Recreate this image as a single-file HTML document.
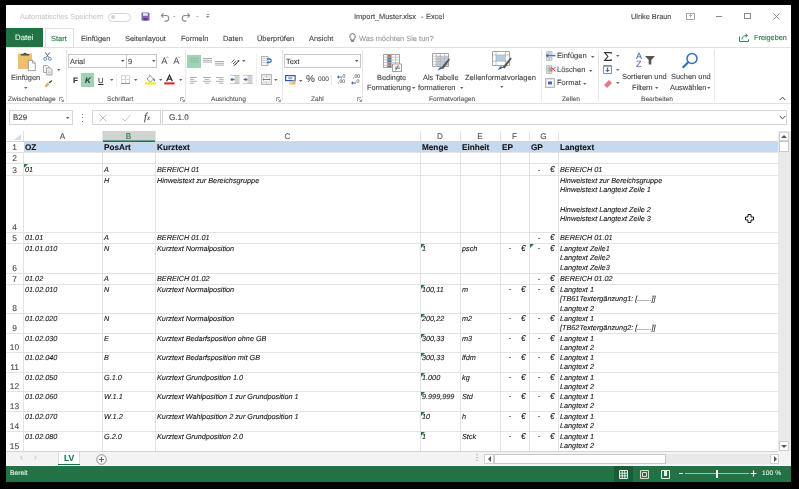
<!DOCTYPE html><html><head><meta charset="utf-8"><style>
html,body{margin:0;padding:0;}
body{width:799px;height:489px;background:#000;position:relative;overflow:hidden;font-family:"Liberation Sans",sans-serif;}
.t{position:absolute;white-space:pre;line-height:1;will-change:transform;text-rendering:geometricPrecision;-webkit-text-stroke:0.1px currentColor;}
.r{position:absolute;}
svg.r{overflow:visible}
</style></head><body>
<div class="r" style="left:6px;top:5px;width:785px;height:477px;background:#fff;"></div>
<div class="r" style="left:24px;top:141px;width:754px;height:11px;background:#c5d9f1;"></div>
<div class="r" style="left:103px;top:131px;width:52px;height:10px;background:#d2d2d2;"></div>
<div class="r" style="left:6px;top:141px;width:772px;height:1px;background:#e3e3e3;"></div>
<div class="r" style="left:6px;top:152px;width:772px;height:1px;background:#e3e3e3;"></div>
<div class="r" style="left:6px;top:163px;width:772px;height:1px;background:#e3e3e3;"></div>
<div class="r" style="left:6px;top:175px;width:772px;height:1px;background:#e3e3e3;"></div>
<div class="r" style="left:6px;top:232px;width:772px;height:1px;background:#e3e3e3;"></div>
<div class="r" style="left:6px;top:243px;width:772px;height:1px;background:#e3e3e3;"></div>
<div class="r" style="left:6px;top:273px;width:772px;height:1px;background:#e3e3e3;"></div>
<div class="r" style="left:6px;top:284px;width:772px;height:1px;background:#e3e3e3;"></div>
<div class="r" style="left:6px;top:313px;width:772px;height:1px;background:#e3e3e3;"></div>
<div class="r" style="left:6px;top:333px;width:772px;height:1px;background:#e3e3e3;"></div>
<div class="r" style="left:6px;top:352px;width:772px;height:1px;background:#e3e3e3;"></div>
<div class="r" style="left:6px;top:372px;width:772px;height:1px;background:#e3e3e3;"></div>
<div class="r" style="left:6px;top:391px;width:772px;height:1px;background:#e3e3e3;"></div>
<div class="r" style="left:6px;top:411px;width:772px;height:1px;background:#e3e3e3;"></div>
<div class="r" style="left:6px;top:431px;width:772px;height:1px;background:#e3e3e3;"></div>
<div class="r" style="left:6px;top:451px;width:772px;height:1px;background:#e3e3e3;"></div>
<div class="r" style="left:23px;top:131px;width:1px;height:10px;background:#e3e3e3;"></div>
<div class="r" style="left:23px;top:152px;width:1px;height:299px;background:#e3e3e3;"></div>
<div class="r" style="left:102px;top:131px;width:1px;height:10px;background:#e3e3e3;"></div>
<div class="r" style="left:102px;top:152px;width:1px;height:299px;background:#e3e3e3;"></div>
<div class="r" style="left:155px;top:131px;width:1px;height:10px;background:#e3e3e3;"></div>
<div class="r" style="left:155px;top:152px;width:1px;height:299px;background:#e3e3e3;"></div>
<div class="r" style="left:420px;top:131px;width:1px;height:10px;background:#e3e3e3;"></div>
<div class="r" style="left:420px;top:152px;width:1px;height:299px;background:#e3e3e3;"></div>
<div class="r" style="left:460px;top:131px;width:1px;height:10px;background:#e3e3e3;"></div>
<div class="r" style="left:460px;top:152px;width:1px;height:299px;background:#e3e3e3;"></div>
<div class="r" style="left:500px;top:131px;width:1px;height:10px;background:#e3e3e3;"></div>
<div class="r" style="left:500px;top:152px;width:1px;height:299px;background:#e3e3e3;"></div>
<div class="r" style="left:529px;top:131px;width:1px;height:10px;background:#e3e3e3;"></div>
<div class="r" style="left:529px;top:152px;width:1px;height:299px;background:#e3e3e3;"></div>
<div class="r" style="left:558px;top:131px;width:1px;height:10px;background:#e3e3e3;"></div>
<div class="r" style="left:558px;top:152px;width:1px;height:299px;background:#e3e3e3;"></div>
<div class="r" style="left:778px;top:131px;width:1px;height:10px;background:#e3e3e3;"></div>
<div class="r" style="left:778px;top:152px;width:1px;height:299px;background:#e3e3e3;"></div>
<div class="r" style="left:24px;top:141px;width:754px;height:11px;background:#c5d9f1;"></div>
<div class="r" style="left:6px;top:141px;width:772px;height:1px;background:#d3d6da;"></div>
<div class="r" style="left:103px;top:140px;width:52px;height:1px;background:#6aa184;"></div>
<div class="r" style="left:103px;top:141px;width:52px;height:1px;background:#217346;"></div>
<svg class="r" style="left:14px;top:134px" width="7" height="6"><polygon points="7,0 7,6 0,6" fill="#dcdcdc"/></svg>
<div class="t" style="left:23px;width:79px;text-align:center;top:132.76px;font-size:8.2px;color:#555">A</div>
<div class="t" style="left:102px;width:53px;text-align:center;top:132.76px;font-size:8.2px;color:#217346">B</div>
<div class="t" style="left:155px;width:265px;text-align:center;top:132.76px;font-size:8.2px;color:#555">C</div>
<div class="t" style="left:420px;width:40px;text-align:center;top:132.76px;font-size:8.2px;color:#555">D</div>
<div class="t" style="left:460px;width:40px;text-align:center;top:132.76px;font-size:8.2px;color:#555">E</div>
<div class="t" style="left:500px;width:29px;text-align:center;top:132.76px;font-size:8.2px;color:#555">F</div>
<div class="t" style="left:529px;width:29px;text-align:center;top:132.76px;font-size:8.2px;color:#555">G</div>
<div class="t" style="left:6px;width:17px;text-align:center;top:142.99px;font-size:8.4px;color:#4a4a4a">1</div>
<div class="t" style="left:6px;width:17px;text-align:center;top:153.99px;font-size:8.4px;color:#4a4a4a">2</div>
<div class="t" style="left:6px;width:17px;text-align:center;top:165.99px;font-size:8.4px;color:#4a4a4a">3</div>
<div class="t" style="left:6px;width:17px;text-align:center;top:222.99px;font-size:8.4px;color:#4a4a4a">4</div>
<div class="t" style="left:6px;width:17px;text-align:center;top:233.99px;font-size:8.4px;color:#4a4a4a">5</div>
<div class="t" style="left:6px;width:17px;text-align:center;top:263.99px;font-size:8.4px;color:#4a4a4a">6</div>
<div class="t" style="left:6px;width:17px;text-align:center;top:274.99px;font-size:8.4px;color:#4a4a4a">7</div>
<div class="t" style="left:6px;width:17px;text-align:center;top:303.99px;font-size:8.4px;color:#4a4a4a">8</div>
<div class="t" style="left:6px;width:17px;text-align:center;top:323.99px;font-size:8.4px;color:#4a4a4a">9</div>
<div class="t" style="left:6px;width:17px;text-align:center;top:342.99px;font-size:8.4px;color:#4a4a4a">10</div>
<div class="t" style="left:6px;width:17px;text-align:center;top:362.99px;font-size:8.4px;color:#4a4a4a">11</div>
<div class="t" style="left:6px;width:17px;text-align:center;top:381.99px;font-size:8.4px;color:#4a4a4a">12</div>
<div class="t" style="left:6px;width:17px;text-align:center;top:401.99px;font-size:8.4px;color:#4a4a4a">13</div>
<div class="t" style="left:6px;width:17px;text-align:center;top:421.99px;font-size:8.4px;color:#4a4a4a">14</div>
<div class="t" style="left:6px;width:17px;text-align:center;top:441.99px;font-size:8.4px;color:#4a4a4a">15</div>
<div class="t" style="left:25.10px;top:144.26px;font-size:8.2px;color:#111;font-style:normal;font-weight:700;">OZ</div>
<div class="t" style="left:104.10px;top:144.26px;font-size:8.2px;color:#111;font-style:normal;font-weight:700;">PosArt</div>
<div class="t" style="left:157.10px;top:144.26px;font-size:8.2px;color:#111;font-style:normal;font-weight:700;">Kurztext</div>
<div class="t" style="left:422.10px;top:144.26px;font-size:8.2px;color:#111;font-style:normal;font-weight:700;">Menge</div>
<div class="t" style="left:462.10px;top:144.26px;font-size:8.2px;color:#111;font-style:normal;font-weight:700;">Einheit</div>
<div class="t" style="left:502.10px;top:144.26px;font-size:8.2px;color:#111;font-style:normal;font-weight:700;">EP</div>
<div class="t" style="left:531.10px;top:144.26px;font-size:8.2px;color:#111;font-style:normal;font-weight:700;">GP</div>
<div class="t" style="left:560.10px;top:144.26px;font-size:8.2px;color:#111;font-style:normal;font-weight:700;">Langtext</div>
<div class="t" style="left:25.00px;top:166.24px;font-size:7.28px;color:#161616;font-style:italic;font-weight:400;">01</div>
<svg class="r" style="left:24px;top:164px" width="4" height="4"><polygon points="0,0 4,0 0,4" fill="#1f7a3e"/></svg>
<div class="t" style="left:104.00px;top:166.24px;font-size:7.28px;color:#161616;font-style:italic;font-weight:400;">A</div>
<div class="t" style="left:157.00px;top:166.24px;font-size:7.28px;color:#161616;font-style:italic;font-weight:400;">BEREICH 01</div>
<div class="r" style="left:538.00px;top:169.70px;width:2.4px;height:1px;background:#808080"></div>
<div class="t" style="left:550.40px;top:166.06px;font-size:8.2px;color:#161616;font-style:italic;font-weight:400;text-rendering:optimizeLegibility;">€</div>
<div class="t" style="left:560.00px;top:166.24px;font-size:7.28px;color:#161616;font-style:italic;font-weight:400;">BEREICH 01</div>
<div class="t" style="left:104.00px;top:176.84px;font-size:7.28px;color:#161616;font-style:italic;font-weight:400;">H</div>
<div class="t" style="left:157.00px;top:176.84px;font-size:7.28px;color:#161616;font-style:italic;font-weight:400;">Hinweistext zur Bereichsgruppe</div>
<div class="t" style="left:560.00px;top:176.84px;font-size:7.28px;color:#161616;font-style:italic;font-weight:400;">Hinweistext zur Bereichsgruppe</div>
<div class="t" style="left:560.00px;top:186.44px;font-size:7.28px;color:#161616;font-style:italic;font-weight:400;">Hinweistext Langtext Zeile 1</div>
<div class="t" style="left:560.00px;top:196.04px;font-size:7.28px;color:#161616;font-style:italic;font-weight:400;"></div>
<div class="t" style="left:560.00px;top:205.64px;font-size:7.28px;color:#161616;font-style:italic;font-weight:400;">Hinweistext Langtext Zeile 2</div>
<div class="t" style="left:560.00px;top:215.24px;font-size:7.28px;color:#161616;font-style:italic;font-weight:400;">Hinweistext Langtext Zeile 3</div>
<div class="t" style="left:25.00px;top:234.24px;font-size:7.28px;color:#161616;font-style:italic;font-weight:400;">01.01</div>
<div class="t" style="left:104.00px;top:234.24px;font-size:7.28px;color:#161616;font-style:italic;font-weight:400;">A</div>
<div class="t" style="left:157.00px;top:234.24px;font-size:7.28px;color:#161616;font-style:italic;font-weight:400;">BEREICH 01.01</div>
<div class="r" style="left:538.00px;top:237.70px;width:2.4px;height:1px;background:#808080"></div>
<div class="t" style="left:550.40px;top:234.06px;font-size:8.2px;color:#161616;font-style:italic;font-weight:400;text-rendering:optimizeLegibility;">€</div>
<div class="t" style="left:560.00px;top:234.24px;font-size:7.28px;color:#161616;font-style:italic;font-weight:400;">BEREICH 01.01</div>
<div class="t" style="left:25.00px;top:244.84px;font-size:7.28px;color:#161616;font-style:italic;font-weight:400;">01.01.010</div>
<div class="t" style="left:104.00px;top:244.84px;font-size:7.28px;color:#161616;font-style:italic;font-weight:400;">N</div>
<div class="t" style="left:157.00px;top:244.84px;font-size:7.28px;color:#161616;font-style:italic;font-weight:400;">Kurztext Normalposition</div>
<svg class="r" style="left:421px;top:244px" width="4" height="4"><polygon points="0,0 4,0 0,4" fill="#1f7a3e"/></svg>
<div class="t" style="left:422.00px;top:244.84px;font-size:7.28px;color:#161616;font-style:italic;font-weight:400;">1</div>
<div class="t" style="left:462.00px;top:244.84px;font-size:7.28px;color:#161616;font-style:italic;font-weight:400;">psch</div>
<div class="r" style="left:509.00px;top:248.30px;width:2.4px;height:1px;background:#808080"></div>
<div class="t" style="left:521.40px;top:244.66px;font-size:8.2px;color:#161616;font-style:italic;font-weight:400;text-rendering:optimizeLegibility;">€</div>
<svg class="r" style="left:530px;top:244px" width="4" height="4"><polygon points="0,0 4,0 0,4" fill="#1f7a3e"/></svg>
<div class="r" style="left:538.00px;top:248.30px;width:2.4px;height:1px;background:#808080"></div>
<div class="t" style="left:550.40px;top:244.66px;font-size:8.2px;color:#161616;font-style:italic;font-weight:400;text-rendering:optimizeLegibility;">€</div>
<div class="t" style="left:560.00px;top:244.84px;font-size:7.28px;color:#161616;font-style:italic;font-weight:400;">Langtext Zeile1</div>
<div class="t" style="left:560.00px;top:254.44px;font-size:7.28px;color:#161616;font-style:italic;font-weight:400;">Langtext Zeile2</div>
<div class="t" style="left:560.00px;top:264.04px;font-size:7.28px;color:#161616;font-style:italic;font-weight:400;">Langtext Zeile3</div>
<div class="t" style="left:25.00px;top:275.24px;font-size:7.28px;color:#161616;font-style:italic;font-weight:400;">01.02</div>
<div class="t" style="left:104.00px;top:275.24px;font-size:7.28px;color:#161616;font-style:italic;font-weight:400;">A</div>
<div class="t" style="left:157.00px;top:275.24px;font-size:7.28px;color:#161616;font-style:italic;font-weight:400;">BEREICH 01.02</div>
<div class="r" style="left:538.00px;top:278.70px;width:2.4px;height:1px;background:#808080"></div>
<div class="t" style="left:550.40px;top:275.06px;font-size:8.2px;color:#161616;font-style:italic;font-weight:400;text-rendering:optimizeLegibility;">€</div>
<div class="t" style="left:560.00px;top:275.24px;font-size:7.28px;color:#161616;font-style:italic;font-weight:400;">BEREICH 01.02</div>
<div class="t" style="left:25.00px;top:285.84px;font-size:7.28px;color:#161616;font-style:italic;font-weight:400;">01.02.010</div>
<div class="t" style="left:104.00px;top:285.84px;font-size:7.28px;color:#161616;font-style:italic;font-weight:400;">N</div>
<div class="t" style="left:157.00px;top:285.84px;font-size:7.28px;color:#161616;font-style:italic;font-weight:400;">Kurztext Normalposition</div>
<svg class="r" style="left:421px;top:285px" width="4" height="4"><polygon points="0,0 4,0 0,4" fill="#1f7a3e"/></svg>
<div class="t" style="left:422.00px;top:285.84px;font-size:7.28px;color:#161616;font-style:italic;font-weight:400;">100,11</div>
<div class="t" style="left:462.00px;top:285.84px;font-size:7.28px;color:#161616;font-style:italic;font-weight:400;">m</div>
<div class="r" style="left:509.00px;top:289.30px;width:2.4px;height:1px;background:#808080"></div>
<div class="t" style="left:521.40px;top:285.66px;font-size:8.2px;color:#161616;font-style:italic;font-weight:400;text-rendering:optimizeLegibility;">€</div>
<div class="r" style="left:538.00px;top:289.30px;width:2.4px;height:1px;background:#808080"></div>
<div class="t" style="left:550.40px;top:285.66px;font-size:8.2px;color:#161616;font-style:italic;font-weight:400;text-rendering:optimizeLegibility;">€</div>
<div class="t" style="left:560.00px;top:285.84px;font-size:7.28px;color:#161616;font-style:italic;font-weight:400;">Langtext 1</div>
<div class="t" style="left:560.00px;top:295.44px;font-size:7.28px;color:#161616;font-style:italic;font-weight:400;">[TB61Textergänzung1: [.......]]</div>
<div class="t" style="left:560.00px;top:305.04px;font-size:7.28px;color:#161616;font-style:italic;font-weight:400;">Langtext 2</div>
<div class="t" style="left:25.00px;top:314.84px;font-size:7.28px;color:#161616;font-style:italic;font-weight:400;">01.02.020</div>
<div class="t" style="left:104.00px;top:314.84px;font-size:7.28px;color:#161616;font-style:italic;font-weight:400;">N</div>
<div class="t" style="left:157.00px;top:314.84px;font-size:7.28px;color:#161616;font-style:italic;font-weight:400;">Kurztext Normalposition</div>
<svg class="r" style="left:421px;top:314px" width="4" height="4"><polygon points="0,0 4,0 0,4" fill="#1f7a3e"/></svg>
<div class="t" style="left:422.00px;top:314.84px;font-size:7.28px;color:#161616;font-style:italic;font-weight:400;">200,22</div>
<div class="t" style="left:462.00px;top:314.84px;font-size:7.28px;color:#161616;font-style:italic;font-weight:400;">m2</div>
<div class="r" style="left:509.00px;top:318.30px;width:2.4px;height:1px;background:#808080"></div>
<div class="t" style="left:521.40px;top:314.66px;font-size:8.2px;color:#161616;font-style:italic;font-weight:400;text-rendering:optimizeLegibility;">€</div>
<div class="r" style="left:538.00px;top:318.30px;width:2.4px;height:1px;background:#808080"></div>
<div class="t" style="left:550.40px;top:314.66px;font-size:8.2px;color:#161616;font-style:italic;font-weight:400;text-rendering:optimizeLegibility;">€</div>
<div class="t" style="left:560.00px;top:314.84px;font-size:7.28px;color:#161616;font-style:italic;font-weight:400;">Langtext 1</div>
<div class="t" style="left:560.00px;top:324.44px;font-size:7.28px;color:#161616;font-style:italic;font-weight:400;">[TB62Textergänzung2: [.......]]</div>
<div class="t" style="left:25.00px;top:334.84px;font-size:7.28px;color:#161616;font-style:italic;font-weight:400;">01.02.030</div>
<div class="t" style="left:104.00px;top:334.84px;font-size:7.28px;color:#161616;font-style:italic;font-weight:400;">E</div>
<div class="t" style="left:157.00px;top:334.84px;font-size:7.28px;color:#161616;font-style:italic;font-weight:400;">Kurztext Bedarfsposition ohne GB</div>
<svg class="r" style="left:421px;top:334px" width="4" height="4"><polygon points="0,0 4,0 0,4" fill="#1f7a3e"/></svg>
<div class="t" style="left:422.00px;top:334.84px;font-size:7.28px;color:#161616;font-style:italic;font-weight:400;">300,33</div>
<div class="t" style="left:462.00px;top:334.84px;font-size:7.28px;color:#161616;font-style:italic;font-weight:400;">m3</div>
<div class="r" style="left:509.00px;top:338.30px;width:2.4px;height:1px;background:#808080"></div>
<div class="t" style="left:521.40px;top:334.66px;font-size:8.2px;color:#161616;font-style:italic;font-weight:400;text-rendering:optimizeLegibility;">€</div>
<div class="r" style="left:538.00px;top:338.30px;width:2.4px;height:1px;background:#808080"></div>
<div class="t" style="left:550.40px;top:334.66px;font-size:8.2px;color:#161616;font-style:italic;font-weight:400;text-rendering:optimizeLegibility;">€</div>
<div class="t" style="left:560.00px;top:334.84px;font-size:7.28px;color:#161616;font-style:italic;font-weight:400;">Langtext 1</div>
<div class="t" style="left:560.00px;top:344.44px;font-size:7.28px;color:#161616;font-style:italic;font-weight:400;">Langtext 2</div>
<div class="t" style="left:25.00px;top:353.84px;font-size:7.28px;color:#161616;font-style:italic;font-weight:400;">01.02.040</div>
<div class="t" style="left:104.00px;top:353.84px;font-size:7.28px;color:#161616;font-style:italic;font-weight:400;">B</div>
<div class="t" style="left:157.00px;top:353.84px;font-size:7.28px;color:#161616;font-style:italic;font-weight:400;">Kurztext Bedarfsposition mit GB</div>
<svg class="r" style="left:421px;top:353px" width="4" height="4"><polygon points="0,0 4,0 0,4" fill="#1f7a3e"/></svg>
<div class="t" style="left:422.00px;top:353.84px;font-size:7.28px;color:#161616;font-style:italic;font-weight:400;">300,33</div>
<div class="t" style="left:462.00px;top:353.84px;font-size:7.28px;color:#161616;font-style:italic;font-weight:400;">lfdm</div>
<div class="r" style="left:509.00px;top:357.30px;width:2.4px;height:1px;background:#808080"></div>
<div class="t" style="left:521.40px;top:353.66px;font-size:8.2px;color:#161616;font-style:italic;font-weight:400;text-rendering:optimizeLegibility;">€</div>
<div class="r" style="left:538.00px;top:357.30px;width:2.4px;height:1px;background:#808080"></div>
<div class="t" style="left:550.40px;top:353.66px;font-size:8.2px;color:#161616;font-style:italic;font-weight:400;text-rendering:optimizeLegibility;">€</div>
<div class="t" style="left:560.00px;top:353.84px;font-size:7.28px;color:#161616;font-style:italic;font-weight:400;">Langtext 1</div>
<div class="t" style="left:560.00px;top:363.44px;font-size:7.28px;color:#161616;font-style:italic;font-weight:400;">Langtext 2</div>
<div class="t" style="left:25.00px;top:373.84px;font-size:7.28px;color:#161616;font-style:italic;font-weight:400;">01.02.050</div>
<div class="t" style="left:104.00px;top:373.84px;font-size:7.28px;color:#161616;font-style:italic;font-weight:400;">G.1.0</div>
<div class="t" style="left:157.00px;top:373.84px;font-size:7.28px;color:#161616;font-style:italic;font-weight:400;">Kurztext Grundposition 1.0</div>
<svg class="r" style="left:421px;top:373px" width="4" height="4"><polygon points="0,0 4,0 0,4" fill="#1f7a3e"/></svg>
<div class="t" style="left:422.00px;top:373.84px;font-size:7.28px;color:#161616;font-style:italic;font-weight:400;">1.000</div>
<div class="t" style="left:462.00px;top:373.84px;font-size:7.28px;color:#161616;font-style:italic;font-weight:400;">kg</div>
<div class="r" style="left:509.00px;top:377.30px;width:2.4px;height:1px;background:#808080"></div>
<div class="t" style="left:521.40px;top:373.66px;font-size:8.2px;color:#161616;font-style:italic;font-weight:400;text-rendering:optimizeLegibility;">€</div>
<div class="r" style="left:538.00px;top:377.30px;width:2.4px;height:1px;background:#808080"></div>
<div class="t" style="left:550.40px;top:373.66px;font-size:8.2px;color:#161616;font-style:italic;font-weight:400;text-rendering:optimizeLegibility;">€</div>
<div class="t" style="left:560.00px;top:373.84px;font-size:7.28px;color:#161616;font-style:italic;font-weight:400;">Langtext 1</div>
<div class="t" style="left:560.00px;top:383.44px;font-size:7.28px;color:#161616;font-style:italic;font-weight:400;">Langtext 2</div>
<div class="t" style="left:25.00px;top:392.84px;font-size:7.28px;color:#161616;font-style:italic;font-weight:400;">01.02.060</div>
<div class="t" style="left:104.00px;top:392.84px;font-size:7.28px;color:#161616;font-style:italic;font-weight:400;">W.1.1</div>
<div class="t" style="left:157.00px;top:392.84px;font-size:7.28px;color:#161616;font-style:italic;font-weight:400;">Kurztext Wahlposition 1 zur Grundposition 1</div>
<svg class="r" style="left:421px;top:392px" width="4" height="4"><polygon points="0,0 4,0 0,4" fill="#1f7a3e"/></svg>
<div class="t" style="left:422.00px;top:392.84px;font-size:7.28px;color:#161616;font-style:italic;font-weight:400;">9.999,999</div>
<div class="t" style="left:462.00px;top:392.84px;font-size:7.28px;color:#161616;font-style:italic;font-weight:400;">Std</div>
<div class="r" style="left:509.00px;top:396.30px;width:2.4px;height:1px;background:#808080"></div>
<div class="t" style="left:521.40px;top:392.66px;font-size:8.2px;color:#161616;font-style:italic;font-weight:400;text-rendering:optimizeLegibility;">€</div>
<div class="r" style="left:538.00px;top:396.30px;width:2.4px;height:1px;background:#808080"></div>
<div class="t" style="left:550.40px;top:392.66px;font-size:8.2px;color:#161616;font-style:italic;font-weight:400;text-rendering:optimizeLegibility;">€</div>
<div class="t" style="left:560.00px;top:392.84px;font-size:7.28px;color:#161616;font-style:italic;font-weight:400;">Langtext 1</div>
<div class="t" style="left:560.00px;top:402.44px;font-size:7.28px;color:#161616;font-style:italic;font-weight:400;">Langtext 2</div>
<div class="t" style="left:25.00px;top:412.84px;font-size:7.28px;color:#161616;font-style:italic;font-weight:400;">01.02.070</div>
<div class="t" style="left:104.00px;top:412.84px;font-size:7.28px;color:#161616;font-style:italic;font-weight:400;">W.1.2</div>
<div class="t" style="left:157.00px;top:412.84px;font-size:7.28px;color:#161616;font-style:italic;font-weight:400;">Kurztext Wahlposition 2 zur Grundposition 1</div>
<svg class="r" style="left:421px;top:412px" width="4" height="4"><polygon points="0,0 4,0 0,4" fill="#1f7a3e"/></svg>
<div class="t" style="left:422.00px;top:412.84px;font-size:7.28px;color:#161616;font-style:italic;font-weight:400;">10</div>
<div class="t" style="left:462.00px;top:412.84px;font-size:7.28px;color:#161616;font-style:italic;font-weight:400;">h</div>
<div class="r" style="left:509.00px;top:416.30px;width:2.4px;height:1px;background:#808080"></div>
<div class="t" style="left:521.40px;top:412.66px;font-size:8.2px;color:#161616;font-style:italic;font-weight:400;text-rendering:optimizeLegibility;">€</div>
<div class="r" style="left:538.00px;top:416.30px;width:2.4px;height:1px;background:#808080"></div>
<div class="t" style="left:550.40px;top:412.66px;font-size:8.2px;color:#161616;font-style:italic;font-weight:400;text-rendering:optimizeLegibility;">€</div>
<div class="t" style="left:560.00px;top:412.84px;font-size:7.28px;color:#161616;font-style:italic;font-weight:400;">Langtext 1</div>
<div class="t" style="left:560.00px;top:422.44px;font-size:7.28px;color:#161616;font-style:italic;font-weight:400;">Langtext 2</div>
<div class="t" style="left:25.00px;top:432.84px;font-size:7.28px;color:#161616;font-style:italic;font-weight:400;">01.02.080</div>
<div class="t" style="left:104.00px;top:432.84px;font-size:7.28px;color:#161616;font-style:italic;font-weight:400;">G.2.0</div>
<div class="t" style="left:157.00px;top:432.84px;font-size:7.28px;color:#161616;font-style:italic;font-weight:400;">Kurztext Grundposition 2.0</div>
<svg class="r" style="left:421px;top:432px" width="4" height="4"><polygon points="0,0 4,0 0,4" fill="#1f7a3e"/></svg>
<div class="t" style="left:422.00px;top:432.84px;font-size:7.28px;color:#161616;font-style:italic;font-weight:400;">1</div>
<div class="t" style="left:462.00px;top:432.84px;font-size:7.28px;color:#161616;font-style:italic;font-weight:400;">Stck</div>
<div class="r" style="left:509.00px;top:436.30px;width:2.4px;height:1px;background:#808080"></div>
<div class="t" style="left:521.40px;top:432.66px;font-size:8.2px;color:#161616;font-style:italic;font-weight:400;text-rendering:optimizeLegibility;">€</div>
<div class="r" style="left:538.00px;top:436.30px;width:2.4px;height:1px;background:#808080"></div>
<div class="t" style="left:550.40px;top:432.66px;font-size:8.2px;color:#161616;font-style:italic;font-weight:400;text-rendering:optimizeLegibility;">€</div>
<div class="t" style="left:560.00px;top:432.84px;font-size:7.28px;color:#161616;font-style:italic;font-weight:400;">Langtext 1</div>
<div class="t" style="left:560.00px;top:442.44px;font-size:7.28px;color:#161616;font-style:italic;font-weight:400;">Langtext 2</div>
<div class="r" style="left:421px;top:451px;width:3px;height:1px;background:#1f7a3e"></div>
<div class="r" style="left:778px;top:131px;width:13px;height:320px;background:#e9e9e9;"></div>
<div class="r" style="left:779px;top:132px;width:10px;height:9px;background:#fff;border:1px solid #d0d0d0;box-sizing:border-box"></div>
<div class="r" style="left:779px;top:141px;width:10px;height:11px;background:#fff;border:1px solid #c8c8c8;box-sizing:border-box"></div>
<svg class="r" style="left:781px;top:134px" width="6" height="5"><polygon points="0,4 3,1 6,4" fill="#555"/></svg>
<div class="r" style="left:779px;top:441px;width:10px;height:10px;background:#fff;border:1px solid #d0d0d0;box-sizing:border-box"></div>
<svg class="r" style="left:781px;top:444px" width="6" height="5"><polygon points="0,1 6,1 3,4" fill="#555"/></svg>
<div class="r" style="left:6px;top:451px;width:785px;height:16px;background:#f3f3f3;"></div>
<div class="r" style="left:6px;top:451px;width:772px;height:1px;background:#d4d4d4;"></div>
<div class="t" style="left:20.00px;top:452.88px;font-size:9px;color:#c4c4c4;font-style:normal;font-weight:400;">&#8249;</div>
<div class="t" style="left:34.00px;top:452.88px;font-size:9px;color:#c4c4c4;font-style:normal;font-weight:400;">&#8250;</div>
<div class="r" style="left:58px;top:452px;width:22px;height:13px;background:#fff;border-left:1px solid #dcdcdc;border-right:1px solid #dcdcdc;box-sizing:border-box"></div>
<div class="r" style="left:58px;top:464px;width:22px;height:1px;background:#1e6b40;"></div>
<div class="r" style="left:6px;top:465px;width:785px;height:1px;background:#fafafa;"></div>
<div class="t" style="left:64.30px;top:453.62px;font-size:8.6px;color:#217346;font-style:normal;font-weight:700;">LV</div>
<svg class="r" style="left:96px;top:454px" width="11" height="11"><circle cx="5.5" cy="5.5" r="4.8" fill="none" stroke="#8a8a8a" stroke-width="0.9"/><path d="M5.5 3v5M3 5.5h5" stroke="#666" stroke-width="1"/></svg>
<div class="t" style="left:472.50px;top:454.23px;font-size:8px;color:#888;font-style:normal;font-weight:400;">&#8942;</div>
<div class="r" style="left:484px;top:454px;width:10px;height:10px;background:#fff;border:1px solid #d0d0d0;box-sizing:border-box"></div>
<svg class="r" style="left:487px;top:456px" width="5" height="6"><polygon points="4,0 4,6 1,3" fill="#555"/></svg>
<div class="r" style="left:494px;top:454px;width:172px;height:10px;background:#fff;border:1px solid #c8c8c8;box-sizing:border-box"></div>
<div class="r" style="left:666px;top:454px;width:104px;height:10px;background:#e9e9e9;"></div>
<div class="r" style="left:770px;top:454px;width:9px;height:10px;background:#fff;border:1px solid #d0d0d0;box-sizing:border-box"></div>
<svg class="r" style="left:773px;top:456px" width="5" height="6"><polygon points="1,0 1,6 4,3" fill="#555"/></svg>
<div class="r" style="left:6px;top:466px;width:785px;height:16px;background:#217346;"></div>
<div class="t" style="left:9.80px;top:470.83px;font-size:6.7px;color:#e8f4ec;font-style:normal;font-weight:400;">Bereit</div>
<div class="r" style="left:614px;top:466px;width:19px;height:16px;background:#1a5c38;"></div>
<svg class="r" style="left:619px;top:470px" width="9" height="9"><path d="M0.5 0.5h8v8h-8zM3.2 0.5v8M5.8 0.5v8M0.5 3.2h8M0.5 5.8h8" fill="none" stroke="#e6efe9" stroke-width="1"/></svg>
<svg class="r" style="left:640px;top:470px" width="9" height="9"><path d="M0.5 0.5h8v8h-8zM2.5 2.5h4v4h-4z" fill="none" stroke="#cfe0d5" stroke-width="1"/></svg>
<svg class="r" style="left:661px;top:470px" width="9" height="9"><path d="M0.5 0.5h8v8h-8z" fill="none" stroke="#e6efe9" stroke-width="1"/><rect x="3" y="1" width="3" height="5" fill="#e6efe9"/></svg>
<div class="r" style="left:679px;top:473px;width:4px;height:1px;background:#e6efe9;"></div>
<div class="r" style="left:685px;top:473px;width:64px;height:1px;background:#9cc3ab;"></div>
<div class="r" style="left:716px;top:470px;width:2px;height:8px;background:#f0f0f0;"></div>
<svg class="r" style="left:750px;top:470px" width="7" height="7"><path d="M3.5 0.5v6M0.5 3.5h6" stroke="#e6efe9" stroke-width="1.2"/></svg>
<div class="t" style="left:761.80px;top:470.91px;font-size:6.6px;color:#e8f4ec;font-style:normal;font-weight:400;letter-spacing:0.1px">100 %</div>
<div class="t" style="left:20.30px;top:13.27px;font-size:7.36px;color:#c9c9c9;font-style:normal;font-weight:400;">Automatisches Speichern</div>
<div class="r" style="left:108px;top:12.5px;width:22.5px;height:9px;border:1px solid #d4d4d4;border-radius:5px;box-sizing:border-box"></div>
<div class="r" style="left:111px;top:15px;width:4px;height:4px;border-radius:2px;background:#d0d0d0"></div>
<svg class="r" style="left:141px;top:12px" width="9" height="9"><path d="M0.5 0.5h7l1 1v7h-8z" fill="#8462b4"/><rect x="2" y="1.2" width="4.8" height="2.6" fill="#fff" opacity="0.85"/><rect x="2.5" y="6" width="4" height="2.5" fill="#5a3f86"/></svg>
<svg class="r" style="left:160px;top:12px" width="10" height="9"><path d="M1.5 3.5h4.5a2.8 2.8 0 0 1 0 5.6h-1.5M3.5 1.3l-2.2 2.2l2.2 2.2" fill="none" stroke="#8a8a8a" stroke-width="1.1"/></svg>
<svg class="r" style="left:173px;top:16px" width="4" height="3"><polygon points="0,0 2.5,0 1.25,1.6" fill="#b0b0b0"/></svg>
<svg class="r" style="left:181px;top:12px" width="10" height="9"><path d="M8.5 3.5h-4.5a2.8 2.8 0 0 0 0 5.6h1.5M6.5 1.3l2.2 2.2l-2.2 2.2" fill="none" stroke="#8a8a8a" stroke-width="1.1"/></svg>
<svg class="r" style="left:195.5px;top:16px" width="4" height="3"><polygon points="0,0 2.5,0 1.25,1.6" fill="#b0b0b0"/></svg>
<svg class="r" style="left:205.5px;top:14px" width="4" height="5"><rect x="0.5" y="0" width="3" height="0.8" fill="#888"/><polygon points="0,2 3.5,2 1.75,4" fill="#888"/></svg>
<div class="t" style="left:353.70px;top:13.14px;font-size:7.4px;color:#444;font-style:normal;font-weight:400;">Import_Muster.xlsx</div>
<div class="t" style="left:420.50px;top:13.14px;font-size:7.4px;color:#444;font-style:normal;font-weight:400;">-</div>
<div class="t" style="left:426.40px;top:13.14px;font-size:7.4px;color:#444;font-style:normal;font-weight:400;">Excel</div>
<div class="t" style="left:630.80px;top:12.88px;font-size:7.35px;color:#444;font-style:normal;font-weight:400;">Ulrike Braun</div>
<svg class="r" style="left:686px;top:13px" width="9" height="7"><path d="M0.5 0.5h8v6h-8z" fill="none" stroke="#999" stroke-width="0.9"/><path d="M4.5 1.5v3M3 3l1.5-1.5L6 3" fill="none" stroke="#999" stroke-width="0.8"/></svg>
<div class="r" style="left:716px;top:16px;width:6px;height:1px;background:#8a8a8a;"></div>
<div class="r" style="left:744px;top:13px;width:7px;height:6px;border:1px solid #8a8a8a;box-sizing:border-box"></div>
<svg class="r" style="left:773px;top:13px" width="7" height="7"><path d="M0.5 0.5l6 6M6.5 0.5l-6 6" stroke="#8a8a8a" stroke-width="0.9"/></svg>
<div class="r" style="left:6px;top:28px;width:37px;height:19px;background:#217346;"></div>
<div class="t" style="left:15.30px;top:34.20px;font-size:7.8px;color:#e8f4ec;font-style:normal;font-weight:400;">Datei</div>
<div class="r" style="left:45px;top:28px;width:29px;height:20px;background:#fff;border:1px solid #e0e0e0;border-bottom:none;box-sizing:border-box"></div>
<div class="t" style="left:51.00px;top:34.79px;font-size:7.45px;color:#217346;font-style:normal;font-weight:400;">Start</div>
<div class="t" style="left:81.40px;top:34.79px;font-size:7.45px;color:#444;font-style:normal;font-weight:400;">Einfügen</div>
<div class="t" style="left:124.90px;top:34.79px;font-size:7.45px;color:#444;font-style:normal;font-weight:400;">Seitenlayout</div>
<div class="t" style="left:180.90px;top:34.79px;font-size:7.45px;color:#444;font-style:normal;font-weight:400;">Formeln</div>
<div class="t" style="left:222.50px;top:34.79px;font-size:7.45px;color:#444;font-style:normal;font-weight:400;">Daten</div>
<div class="t" style="left:256.70px;top:34.79px;font-size:7.45px;color:#444;font-style:normal;font-weight:400;">Überprüfen</div>
<div class="t" style="left:309.40px;top:34.79px;font-size:7.45px;color:#444;font-style:normal;font-weight:400;">Ansicht</div>
<svg class="r" style="left:349px;top:33px" width="7" height="10"><path d="M3.5 0.7a2.7 2.7 0 0 1 1.6 4.9v1.6h-3.2v-1.6a2.7 2.7 0 0 1 1.6-4.9z" fill="none" stroke="#444" stroke-width="0.8"/><path d="M2.2 8.2h2.6" stroke="#444" stroke-width="0.9"/></svg>
<div class="t" style="left:359.00px;top:34.79px;font-size:7.45px;color:#999;font-style:normal;font-weight:400;">Was möchten Sie tun?</div>
<svg class="r" style="left:739px;top:33px" width="11" height="9"><path d="M0.5 3.5v5h9v-2" fill="none" stroke="#217346" stroke-width="0.9"/><path d="M3 6.5c0-3 2-4 5-4M6.5 0.7l2 1.8l-2 1.8" fill="none" stroke="#217346" stroke-width="0.9"/></svg>
<div class="t" style="left:754.00px;top:34.22px;font-size:7.3px;color:#217346;font-style:normal;font-weight:400;">Freigeben</div>
<div class="r" style="left:6px;top:47px;width:785px;height:1px;background:#e1e1e1;"></div>
<div class="r" style="left:6px;top:103px;width:785px;height:1px;background:#e0e0e0;"></div>
<div class="r" style="left:66px;top:50px;width:1px;height:51px;background:#e6e6e6;"></div>
<div class="r" style="left:185px;top:50px;width:1px;height:51px;background:#e6e6e6;"></div>
<div class="r" style="left:282px;top:50px;width:1px;height:51px;background:#e6e6e6;"></div>
<div class="r" style="left:362px;top:50px;width:1px;height:51px;background:#e6e6e6;"></div>
<div class="r" style="left:541px;top:50px;width:1px;height:51px;background:#e6e6e6;"></div>
<div class="r" style="left:598px;top:50px;width:1px;height:51px;background:#e6e6e6;"></div>
<div class="r" style="left:714px;top:50px;width:1px;height:51px;background:#e6e6e6;"></div>
<div class="t" style="left:7.70px;top:97.01px;font-size:6.6px;color:#555;font-style:normal;font-weight:400;">Zwischenablage</div>
<div class="t" style="left:107.20px;top:97.01px;font-size:6.6px;color:#555;font-style:normal;font-weight:400;">Schriftart</div>
<div class="t" style="left:211.00px;top:97.01px;font-size:6.6px;color:#555;font-style:normal;font-weight:400;">Ausrichtung</div>
<div class="t" style="left:310.90px;top:97.01px;font-size:6.6px;color:#555;font-style:normal;font-weight:400;">Zahl</div>
<div class="t" style="left:429.00px;top:97.01px;font-size:6.6px;color:#555;font-style:normal;font-weight:400;">Formatvorlagen</div>
<div class="t" style="left:561.60px;top:97.01px;font-size:6.6px;color:#555;font-style:normal;font-weight:400;">Zellen</div>
<div class="t" style="left:641.00px;top:97.01px;font-size:6.6px;color:#555;font-style:normal;font-weight:400;">Bearbeiten</div>
<svg class="r" style="left:59px;top:96.5px" width="5" height="5"><path d="M0.5 4V0.5H4M1.5 1.5l3 3M2.5 4.5h2v-2" fill="none" stroke="#888" stroke-width="0.8"/></svg>
<svg class="r" style="left:180px;top:96.5px" width="5" height="5"><path d="M0.5 4V0.5H4M1.5 1.5l3 3M2.5 4.5h2v-2" fill="none" stroke="#888" stroke-width="0.8"/></svg>
<svg class="r" style="left:276px;top:96.5px" width="5" height="5"><path d="M0.5 4V0.5H4M1.5 1.5l3 3M2.5 4.5h2v-2" fill="none" stroke="#888" stroke-width="0.8"/></svg>
<svg class="r" style="left:357px;top:96.5px" width="5" height="5"><path d="M0.5 4V0.5H4M1.5 1.5l3 3M2.5 4.5h2v-2" fill="none" stroke="#888" stroke-width="0.8"/></svg>
<svg class="r" style="left:779px;top:95.5px" width="7" height="5"><path d="M0.7 4l2.8-2.8L6.3 4" fill="none" stroke="#444" stroke-width="1"/></svg>
<svg class="r" style="left:18px;top:51px" width="19" height="21"><rect x="0" y="2.5" width="14" height="15.5" fill="#efbf6f"/><path d="M2.8 4.5v-1.6h2.4a2 2 0 0 1 3.6 0h2.4v1.6z" fill="#4f4f4f"/><path d="M10.3 9.3h4.2l2.8 2.8v7.5h-7z" fill="#fff" stroke="#8a8a8a" stroke-width="0.8"/><path d="M14.5 9.3v2.8h2.8" fill="none" stroke="#8a8a8a" stroke-width="0.7"/></svg>
<div class="t" style="left:10.60px;top:73.84px;font-size:7.4px;color:#444;font-style:normal;font-weight:400;">Einfügen</div>
<svg class="r" style="left:23.5px;top:86.5px" width="4" height="3"><polygon points="0,0 3.5,0 1.75,2" fill="#666"/></svg>
<svg class="r" style="left:43px;top:52px" width="9" height="9"><path d="M2.2 0.3l3.6 5.2M6.8 0.3l-3.6 5.2" stroke="#555" stroke-width="0.9"/><circle cx="2.2" cy="6.8" r="1.5" fill="none" stroke="#5a82b8" stroke-width="0.9"/><circle cx="6.8" cy="6.8" r="1.5" fill="none" stroke="#5a82b8" stroke-width="0.9"/></svg>
<svg class="r" style="left:43px;top:65px" width="10" height="11"><path d="M0.5 0.5h4l1.5 1.5v5.5h-5.5z" fill="#f2f2f2" stroke="#8a8a8a" stroke-width="0.7"/><path d="M3.5 3h4l1.5 1.5v5.5h-5.5z" fill="#f2f2f2" stroke="#8a8a8a" stroke-width="0.7"/><path d="M4.8 6h3M4.8 7.5h3M4.8 9h3" stroke="#aaa" stroke-width="0.5"/></svg>
<svg class="r" style="left:56.5px;top:69px" width="4" height="3"><polygon points="0,0 3.5,0 1.75,2" fill="#666"/></svg>
<svg class="r" style="left:44px;top:80px" width="9" height="8"><path d="M1.5 6.5l3-3" stroke="#e2b468" stroke-width="3"/><path d="M5 3l2.8-2.5" stroke="#4a4a4a" stroke-width="1.3"/></svg>
<div class="r" style="left:68px;top:54px;width:89px;height:14px;border:1px solid #c6c6c6;box-sizing:border-box;background:#fff"></div>
<div class="r" style="left:126px;top:55px;width:1px;height:12px;background:#c6c6c6;"></div>
<div class="t" style="left:70.00px;top:57.94px;font-size:7.4px;color:#444;font-style:normal;font-weight:400;">Arial</div>
<div class="t" style="left:127.50px;top:57.94px;font-size:7.4px;color:#444;font-style:normal;font-weight:400;">9</div>
<svg class="r" style="left:121px;top:60px" width="4" height="3"><polygon points="0,0 3.5,0 1.75,2" fill="#555"/></svg>
<svg class="r" style="left:151.5px;top:60px" width="4" height="3"><polygon points="0,0 3.5,0 1.75,2" fill="#555"/></svg>
<svg class="r" style="left:160.5px;top:55.5px" width="8" height="9"><path d="M0.8 8l2.6-6.5L6 8M1.8 5.8h3.2" fill="none" stroke="#555" stroke-width="0.9"/><path d="M5.2 1.8l1-1.2 1 1.2" fill="none" stroke="#666" stroke-width="0.6"/></svg>
<svg class="r" style="left:173px;top:55.5px" width="8" height="9"><path d="M0.8 8l2.6-6.5L6 8M1.8 5.8h3.2" fill="none" stroke="#555" stroke-width="0.9"/><path d="M5.2 0.6l1 1.2 1-1.2" fill="none" stroke="#666" stroke-width="0.6"/></svg>
<div class="r" style="left:81px;top:73px;width:13px;height:14px;background:#a0d3b6;"></div>
<div class="t" style="left:72.70px;top:76.53px;font-size:8px;color:#333;font-style:normal;font-weight:700;">F</div>
<div class="t" style="left:84.80px;top:76.53px;font-size:8px;color:#333;font-style:italic;font-weight:700;">K</div>
<div class="t" style="left:98.20px;top:76.87px;font-size:7.6px;color:#333;font-style:normal;font-weight:400;text-decoration:underline">U</div>
<svg class="r" style="left:110px;top:79px" width="4" height="3"><polygon points="0,0 3.5,0 1.75,2" fill="#666"/></svg>
<svg class="r" style="left:134px;top:79px" width="4" height="3"><polygon points="0,0 3.5,0 1.75,2" fill="#666"/></svg>
<svg class="r" style="left:158.8px;top:79px" width="4" height="3"><polygon points="0,0 3.5,0 1.75,2" fill="#666"/></svg>
<svg class="r" style="left:179px;top:79px" width="4" height="3"><polygon points="0,0 3.5,0 1.75,2" fill="#666"/></svg>
<div class="r" style="left:116px;top:74px;width:1px;height:12px;background:#f0f0f0;"></div>
<svg class="r" style="left:121px;top:75px" width="9" height="9"><path d="M0.5 0.5h8v8h-8zM4.5 0.5v8M0.5 4.5h8" fill="none" stroke="#c4c4c4" stroke-width="0.7"/><path d="M0 8.5h9" stroke="#8a8a8a" stroke-width="0.9"/></svg>
<svg class="r" style="left:145px;top:74px" width="11" height="11"><path d="M2 5l3-3.5 3.5 3.5-3 3z" fill="#fff" stroke="#777" stroke-width="0.8"/><path d="M5 1.5l-0.5-1.3" stroke="#888" stroke-width="0.7"/><path d="M8.6 4.6c0.9 1.1 1.1 1.9 0.4 2.5" stroke="#3d5f8a" fill="none" stroke-width="1.2"/><rect x="0" y="8.4" width="11" height="2" fill="#f2e600"/></svg>
<svg class="r" style="left:164px;top:74px" width="11" height="11"><path d="M2.6 7.3L5.5 1.2L8.4 7.3M3.7 5.2h3.6" fill="none" stroke="#333" stroke-width="1.3"/><rect x="0.3" y="8.4" width="10.3" height="2" fill="#e0201e"/></svg>
<div class="r" style="left:187px;top:55px;width:14px;height:13px;background:#a0d3b6;"></div>
<svg class="r" style="left:189.5px;top:58px" width="9" height="6.4"><rect x="0" y="0.0" width="9" height="0.9" fill="#8fbfa3"/><rect x="0" y="1.8" width="9" height="0.9" fill="#8fbfa3"/><rect x="0" y="3.6" width="9" height="0.9" fill="#8fbfa3"/></svg>
<svg class="r" style="left:202.5px;top:58.3px" width="9" height="6.4"><rect x="0" y="0.0" width="9" height="0.9" fill="#a5a5a5"/><rect x="0" y="1.8" width="9" height="0.9" fill="#a5a5a5"/><rect x="0" y="3.6" width="9" height="0.9" fill="#a5a5a5"/></svg>
<svg class="r" style="left:215.3px;top:60.5px" width="9" height="6.4"><rect x="0" y="0.0" width="9" height="0.9" fill="#a5a5a5"/><rect x="0" y="1.8" width="9" height="0.9" fill="#a5a5a5"/><rect x="0" y="3.6" width="9" height="0.9" fill="#a5a5a5"/></svg>
<svg class="r" style="left:229.5px;top:56.5px" width="10" height="9"><path d="M1.5 5.5l3-3M3 7l3-3M4.5 8.5l3-3" stroke="#555" stroke-width="0.9"/><path d="M4 8.5l5-5" stroke="#333" stroke-width="0.8"/><path d="M9.3 3.2l-2 0.3 1.7 1.7z" fill="#333"/></svg>
<svg class="r" style="left:242px;top:60px" width="4" height="3"><polygon points="0,0 3.5,0 1.75,2" fill="#666"/></svg>
<svg class="r" style="left:190.3px;top:76.8px" width="7" height="8.6"><rect x="0" y="0.0" width="7" height="0.9" fill="#aaa"/><rect x="0" y="1.9" width="4.2" height="0.9" fill="#aaa"/><rect x="0" y="3.8" width="7" height="0.9" fill="#aaa"/><rect x="0" y="5.699999999999999" width="4.2" height="0.9" fill="#aaa"/></svg>
<svg class="r" style="left:203px;top:76.8px" width="8" height="8.6"><rect x="0.0" y="0.0" width="8" height="0.9" fill="#aaa"/><rect x="1.6" y="1.9" width="4.8" height="0.9" fill="#aaa"/><rect x="0.0" y="3.8" width="8" height="0.9" fill="#aaa"/><rect x="1.6" y="5.699999999999999" width="4.8" height="0.9" fill="#aaa"/></svg>
<svg class="r" style="left:216px;top:76.8px" width="7.5" height="8.6"><rect x="0.0" y="0.0" width="7.5" height="0.9" fill="#aaa"/><rect x="3.0" y="1.9" width="4.5" height="0.9" fill="#aaa"/><rect x="0.0" y="3.8" width="7.5" height="0.9" fill="#aaa"/><rect x="3.0" y="5.699999999999999" width="4.5" height="0.9" fill="#aaa"/></svg>
<svg class="r" style="left:229.5px;top:75px" width="10" height="9"><rect x="4.5" y="0" width="5" height="9" fill="#d2d2d2"/><path d="M0 0.4h9.5M0 8.6h9.5" stroke="#bbb" stroke-width="0.8"/><path d="M1 4.5h3.5" stroke="#3d6aa8" stroke-width="1.3"/><path d="M0.3 4.5l2.2-2v4z" fill="#3d6aa8"/></svg>
<svg class="r" style="left:242.8px;top:75px" width="10" height="9"><rect x="4.5" y="0" width="5" height="9" fill="#d2d2d2"/><path d="M0 0.4h9.5M0 8.6h9.5" stroke="#bbb" stroke-width="0.8"/><path d="M0.5 4.5h3" stroke="#3d6aa8" stroke-width="1.3"/><path d="M4.7 4.5l-2.2-2v4z" fill="#3d6aa8"/></svg>
<div class="r" style="left:256px;top:54px;width:1px;height:32px;background:#f0f0f0;"></div>
<svg class="r" style="left:261px;top:56px" width="11" height="10"><path d="M0.5 0.5h6.5v9h-6.5z" fill="#f4f4f4" stroke="#a0a0a0" stroke-width="0.8"/><path d="M1.5 2.5h4.5M1.5 4.5h4.5M1.5 6.5h4.5" stroke="#c0c0c0" stroke-width="0.7"/><path d="M6 3h2.5a1.7 1.7 0 0 1 0 3.4h-2" fill="none" stroke="#3a6fb5" stroke-width="1.3"/><path d="M5.5 6.4l1.8-1.5v3z" fill="#3a6fb5"/></svg>
<svg class="r" style="left:260.5px;top:74px" width="11" height="11"><path d="M0.5 0.5h10v10h-10z" fill="#e6e6e6" stroke="#a8a8a8" stroke-width="0.8"/><path d="M5.5 0.5v10" stroke="#c4c4c4" stroke-width="0.7"/><rect x="1" y="3.8" width="9" height="3.4" fill="#fff"/><path d="M2.3 5.5h6.4" stroke="#4f6f96" stroke-width="0.9"/><path d="M1.3 5.5l1.6-1.3v2.6zM9.7 5.5l-1.6-1.3v2.6z" fill="#4f6f96"/></svg>
<svg class="r" style="left:274px;top:79px" width="4" height="3"><polygon points="0,0 3.5,0 1.75,2" fill="#666"/></svg>
<div class="r" style="left:284px;top:54px;width:77px;height:14px;border:1px solid #c6c6c6;box-sizing:border-box;background:#fff"></div>
<div class="t" style="left:286.00px;top:57.94px;font-size:7.4px;color:#444;font-style:normal;font-weight:400;">Text</div>
<svg class="r" style="left:355px;top:60px" width="4" height="3"><polygon points="0,0 3.5,0 1.75,2" fill="#555"/></svg>
<svg class="r" style="left:285px;top:75px" width="11" height="10"><rect x="0.6" y="0.6" width="9.5" height="5" fill="#fff" stroke="#2f5f9e" stroke-width="1.2"/><ellipse cx="5.3" cy="3.1" rx="2.4" ry="1.3" fill="#8fb3dd"/><path d="M4 6.5h4v3.2h-4z" fill="#f3cf9a"/><path d="M7.5 5.5h3v4h-3z" fill="#e8b877"/></svg>
<svg class="r" style="left:299px;top:79.5px" width="4" height="3"><polygon points="0,0 3.5,0 1.75,2" fill="#666"/></svg>
<div class="t" style="left:305.80px;top:74.73px;font-size:10px;color:#555;font-style:normal;font-weight:400;">%</div>
<div class="t" style="left:318.00px;top:76.71px;font-size:6.6px;color:#555;font-style:normal;font-weight:400;">000</div>
<div class="r" style="left:331px;top:75px;width:1px;height:10px;background:#e8e8e8;"></div>
<svg class="r" style="left:336.5px;top:75px" width="5" height="4"><path d="M1 2h3.5" stroke="#3d6aa8" stroke-width="1"/><path d="M0 2l2-1.8v3.6z" fill="#3d6aa8"/></svg>
<div class="t" style="left:340.50px;top:75.20px;font-size:5.2px;color:#555;font-style:normal;font-weight:400;">,0</div>
<div class="t" style="left:337.50px;top:80.20px;font-size:5.2px;color:#555;font-style:normal;font-weight:400;">,00</div>
<svg class="r" style="left:350.5px;top:80.5px" width="5" height="4"><path d="M1 2h3.5" stroke="#3d6aa8" stroke-width="1"/><path d="M0 2l2-1.8v3.6z" fill="#3d6aa8"/></svg>
<div class="t" style="left:352.50px;top:75.20px;font-size:5.2px;color:#555;font-style:normal;font-weight:400;">,00</div>
<div class="t" style="left:354.50px;top:80.20px;font-size:5.2px;color:#555;font-style:normal;font-weight:400;">,0</div>
<svg class="r" style="left:383px;top:53.5px" width="23" height="20"><rect x="0" y="0" width="17" height="14" fill="#fff"/><rect x="4.2" y="0.5" width="4.2" height="2.7" fill="#e0643a"/><rect x="4.2" y="3.2" width="4.2" height="2.7" fill="#3f75b8"/><rect x="4.2" y="5.9" width="4.2" height="2.7" fill="#3f75b8"/><rect x="4.2" y="8.6" width="4.2" height="2.7" fill="#e0643a"/><rect x="4.2" y="11.3" width="4.2" height="2.2" fill="#3f75b8"/><path d="M0.5 0.5h16v13h-16z" fill="none" stroke="#9a9a9a" stroke-width="0.9"/><path d="M4.2 0.5v13" stroke="#b0b0b0" stroke-width="0.7"/><path d="M8.4 0.5v13" stroke="#b0b0b0" stroke-width="0.7"/><path d="M12.6 0.5v13" stroke="#b0b0b0" stroke-width="0.7"/><path d="M0.5 3.2h16" stroke="#b0b0b0" stroke-width="0.7"/><path d="M0.5 5.9h16" stroke="#b0b0b0" stroke-width="0.7"/><path d="M0.5 8.6h16" stroke="#b0b0b0" stroke-width="0.7"/><path d="M0.5 11.3h16" stroke="#b0b0b0" stroke-width="0.7"/><path d="M9.5 10h9v7.5h-9z" fill="#fff" stroke="#8a8a8a" stroke-width="0.8"/><path d="M12.5 16.5l3-5.5M11.8 13h5M11.8 14.6h5" stroke="#444" stroke-width="0.6"/></svg>
<svg class="r" style="left:432px;top:53px" width="23" height="20"><rect x="0" y="0" width="17" height="14" fill="#fff"/><rect x="4.2" y="3.2" width="12.5" height="10.5" fill="#c3cfdd"/><path d="M0.5 0.5h16v13h-16z" fill="none" stroke="#9a9a9a" stroke-width="0.9"/><path d="M4.2 0.5v13" stroke="#b0b0b0" stroke-width="0.7"/><path d="M8.4 0.5v13" stroke="#b0b0b0" stroke-width="0.7"/><path d="M12.6 0.5v13" stroke="#b0b0b0" stroke-width="0.7"/><path d="M0.5 3.2h16" stroke="#b0b0b0" stroke-width="0.7"/><path d="M0.5 5.9h16" stroke="#b0b0b0" stroke-width="0.7"/><path d="M0.5 8.6h16" stroke="#b0b0b0" stroke-width="0.7"/><path d="M0.5 11.3h16" stroke="#b0b0b0" stroke-width="0.7"/><path d="M5.5 17.5l2.5-3.5 3 1.5z" fill="#2f6db5"/><path d="M9 14.8l7.8-9.2 1.2 1-6.8 9.5z" fill="#555"/></svg>
<svg class="r" style="left:492px;top:51.2px" width="24" height="21"><rect x="0" y="0" width="18" height="15" fill="#fff"/><rect x="4" y="4" width="9.5" height="6.2" fill="#b6cde6"/><path d="M0.5 0.5h17v14h-17z" fill="none" stroke="#9a9a9a" stroke-width="0.9"/><path d="M4 0.5v14" stroke="#b0b0b0" stroke-width="0.7"/><path d="M13.5 0.5v14" stroke="#b0b0b0" stroke-width="0.7"/><path d="M0.5 4h17" stroke="#b0b0b0" stroke-width="0.7"/><path d="M0.5 10.2h17" stroke="#b0b0b0" stroke-width="0.7"/><path d="M5.8 19l2.6-4 3.6 1.6z" fill="#2f6db5"/><path d="M10.5 16.2l8-9.8 1.3 1.1-7.2 10z" fill="#555"/></svg>
<div class="t" style="left:376.70px;top:73.64px;font-size:7.4px;color:#444;font-style:normal;font-weight:400;">Bedingte</div>
<div class="t" style="left:366.50px;top:83.54px;font-size:7.4px;color:#444;font-style:normal;font-weight:400;">Formatierung</div>
<div class="t" style="left:423.00px;top:73.64px;font-size:7.4px;color:#444;font-style:normal;font-weight:400;">Als Tabelle</div>
<div class="t" style="left:418.30px;top:83.54px;font-size:7.4px;color:#444;font-style:normal;font-weight:400;">formatieren</div>
<div class="t" style="left:465.30px;top:73.51px;font-size:7.55px;color:#444;font-style:normal;font-weight:400;">Zellenformatvorlagen</div>
<svg class="r" style="left:412px;top:86.5px" width="4" height="3"><polygon points="0,0 3.5,0 1.75,2" fill="#666"/></svg>
<svg class="r" style="left:460px;top:86.5px" width="4" height="3"><polygon points="0,0 3.5,0 1.75,2" fill="#666"/></svg>
<svg class="r" style="left:499.5px;top:86px" width="4" height="3"><polygon points="0,0 3.5,0 1.75,2" fill="#666"/></svg>
<svg class="r" style="left:545.5px;top:51px" width="10" height="10"><path d="M0.5 0.5h2.5v2.5h-2.5zM3.5 0.5h2.5v2.5h-2.5zM0.5 6.5h2.5v3h-2.5zM3.5 6.5h2.5v3h-2.5z" fill="#e4e4e4" stroke="#aaa" stroke-width="0.6"/><rect x="0" y="3.8" width="9.5" height="1.6" fill="#4a7ab8"/><rect x="0.5" y="3.4" width="2" height="2.4" fill="#3a6aa8"/></svg>
<svg class="r" style="left:545.5px;top:65px" width="10" height="9"><path d="M0.5 0.5h2.5v2.5h-2.5zM3.5 0.5h2.5v2.5h-2.5zM0.5 3.5h2.5v2h-2.5zM0.5 6h2.5v2.5h-2.5zM3.5 6h2.5v2.5h-2.5z" fill="#e4e4e4" stroke="#aaa" stroke-width="0.6"/><rect x="3" y="3" width="3" height="3" fill="#8ab0a0"/><path d="M5 2l4.5 4.5M9.5 2l-4.5 4.5" stroke="#d9443a" stroke-width="1"/></svg>
<svg class="r" style="left:545px;top:78px" width="10" height="10"><path d="M0.5 0.5h9v9h-9z" fill="#f2f2f2" stroke="#aaa" stroke-width="0.8"/><path d="M1.5 1.5h7v7h-7z" fill="#fff" stroke="#ccc" stroke-width="0.5"/><rect x="3" y="3.5" width="4" height="3" fill="#3a6fb0"/><path d="M0.5 7v2.5h2.5" stroke="#e8b060" stroke-width="1" fill="none"/></svg>
<div class="t" style="left:557.00px;top:51.85px;font-size:7.5px;color:#444;font-style:normal;font-weight:400;">Einfügen</div>
<div class="t" style="left:557.00px;top:65.95px;font-size:7.5px;color:#444;font-style:normal;font-weight:400;">Löschen</div>
<div class="t" style="left:557.00px;top:79.15px;font-size:7.5px;color:#444;font-style:normal;font-weight:400;">Format</div>
<svg class="r" style="left:591px;top:56px" width="4" height="3"><polygon points="0,0 3.5,0 1.75,2" fill="#666"/></svg>
<svg class="r" style="left:588.5px;top:69.5px" width="4" height="3"><polygon points="0,0 3.5,0 1.75,2" fill="#666"/></svg>
<svg class="r" style="left:583px;top:83px" width="4" height="3"><polygon points="0,0 3.5,0 1.75,2" fill="#666"/></svg>
<svg class="r" style="left:604px;top:51.5px" width="8" height="9"><path d="M7.2 1.8V0.6H0.6l3.3 3.9L0.6 8.4h6.6V7.2" fill="none" stroke="#333" stroke-width="1.1"/></svg>
<svg class="r" style="left:603px;top:65px" width="9" height="9"><path d="M0.5 0.5h8v8h-8z" fill="#fff" stroke="#7a8796" stroke-width="0.9"/><rect x="0.5" y="0.5" width="8" height="1.2" fill="#7a8796"/><path d="M4.5 2.5v3.5" stroke="#2e6fc0" stroke-width="1.3"/><path d="M2.3 5l2.2 2.3 2.2-2.3z" fill="#2e6fc0"/></svg>
<svg class="r" style="left:603px;top:79px" width="10" height="9"><path d="M1 6l5-5 3 3-5 5z" fill="#e27a8a"/></svg>
<svg class="r" style="left:616px;top:55px" width="4" height="3"><polygon points="0,0 3.5,0 1.75,2" fill="#666"/></svg>
<svg class="r" style="left:616px;top:68.5px" width="4" height="3"><polygon points="0,0 3.5,0 1.75,2" fill="#666"/></svg>
<svg class="r" style="left:616px;top:82px" width="4" height="3"><polygon points="0,0 3.5,0 1.75,2" fill="#666"/></svg>
<div class="t" style="left:635.80px;top:52.38px;font-size:9px;color:#3a6fb0;font-style:normal;font-weight:400;">A</div>
<div class="t" style="left:636.00px;top:60.38px;font-size:9px;color:#8a5aa8;font-style:normal;font-weight:400;">Z</div>
<svg class="r" style="left:644.5px;top:56px" width="10" height="9"><path d="M0 0h10l-3.7 4v4.5h-2.6v-4.5z" fill="#555"/></svg>
<svg class="r" style="left:681px;top:52px" width="18" height="18"><circle cx="11" cy="6.5" r="5" fill="none" stroke="#2e6fc0" stroke-width="1.5"/><path d="M7.2 10.3l-5.5 5.5" stroke="#2e6fc0" stroke-width="2.2"/></svg>
<div class="t" style="left:622.30px;top:73.09px;font-size:7.45px;color:#444;font-style:normal;font-weight:400;">Sortieren und</div>
<div class="t" style="left:631.60px;top:83.69px;font-size:7.45px;color:#444;font-style:normal;font-weight:400;">Filtern</div>
<div class="t" style="left:670.90px;top:73.09px;font-size:7.45px;color:#444;font-style:normal;font-weight:400;">Suchen und</div>
<div class="t" style="left:669.50px;top:83.69px;font-size:7.45px;color:#444;font-style:normal;font-weight:400;">Auswählen</div>
<svg class="r" style="left:654.5px;top:86.5px" width="4" height="3"><polygon points="0,0 3.5,0 1.75,2" fill="#666"/></svg>
<svg class="r" style="left:707px;top:86.5px" width="4" height="3"><polygon points="0,0 3.5,0 1.75,2" fill="#666"/></svg>
<div class="r" style="left:9px;top:110px;width:64px;height:15px;border:1px solid #d6d6d6;box-sizing:border-box;background:#fff"></div>
<div class="t" style="left:12.70px;top:113.91px;font-size:7.9px;color:#444;font-style:normal;font-weight:400;">B29</div>
<svg class="r" style="left:65.5px;top:116.5px" width="4" height="3"><polygon points="0,0 3.5,0 1.75,2" fill="#555"/></svg>
<div class="r" style="left:82px;top:113.5px;width:1px;height:1.0px;background:#777;"></div>
<div class="r" style="left:82px;top:117px;width:1px;height:1px;background:#777;"></div>
<div class="r" style="left:82px;top:120.5px;width:1px;height:1.0px;background:#777;"></div>
<div class="r" style="left:92px;top:110px;width:69px;height:15px;border:1px solid #d6d6d6;box-sizing:border-box;background:#fff"></div>
<svg class="r" style="left:99px;top:113.5px" width="8" height="8"><path d="M0.5 0.5l7 7M7.5 0.5l-7 7" stroke="#bbb" stroke-width="0.9"/></svg>
<svg class="r" style="left:122px;top:113.5px" width="9" height="8"><path d="M0.5 4.5l2.5 2.5 5.5-6" fill="none" stroke="#bbb" stroke-width="0.9"/></svg>
<div class="t" style="left:144.20px;top:112.61px;font-size:10.5px;color:#444;font-style:normal;font-weight:400;font-family:'Liberation Serif',serif"><i>f</i><span style='font-size:7px'><i>x</i></span></div>
<div class="r" style="left:162px;top:110px;width:625px;height:15px;border:1px solid #d6d6d6;box-sizing:border-box;background:#fff"></div>
<div class="t" style="left:169.00px;top:113.74px;font-size:8.1px;color:#444;font-style:normal;font-weight:400;">G.1.0</div>
<svg class="r" style="left:779px;top:115px" width="7" height="5"><path d="M0.7 1l2.8 2.8L6.3 1" fill="none" stroke="#444" stroke-width="1"/></svg>
<svg class="r" style="left:745.3px;top:213.8px" width="9" height="9"><path d="M3 0.5h3v2.5h2.5v3h-2.5v2.5h-3v-2.5h-2.5v-3h2.5z" fill="#fff" stroke="#000" stroke-width="0.9"/></svg>
</body></html>
